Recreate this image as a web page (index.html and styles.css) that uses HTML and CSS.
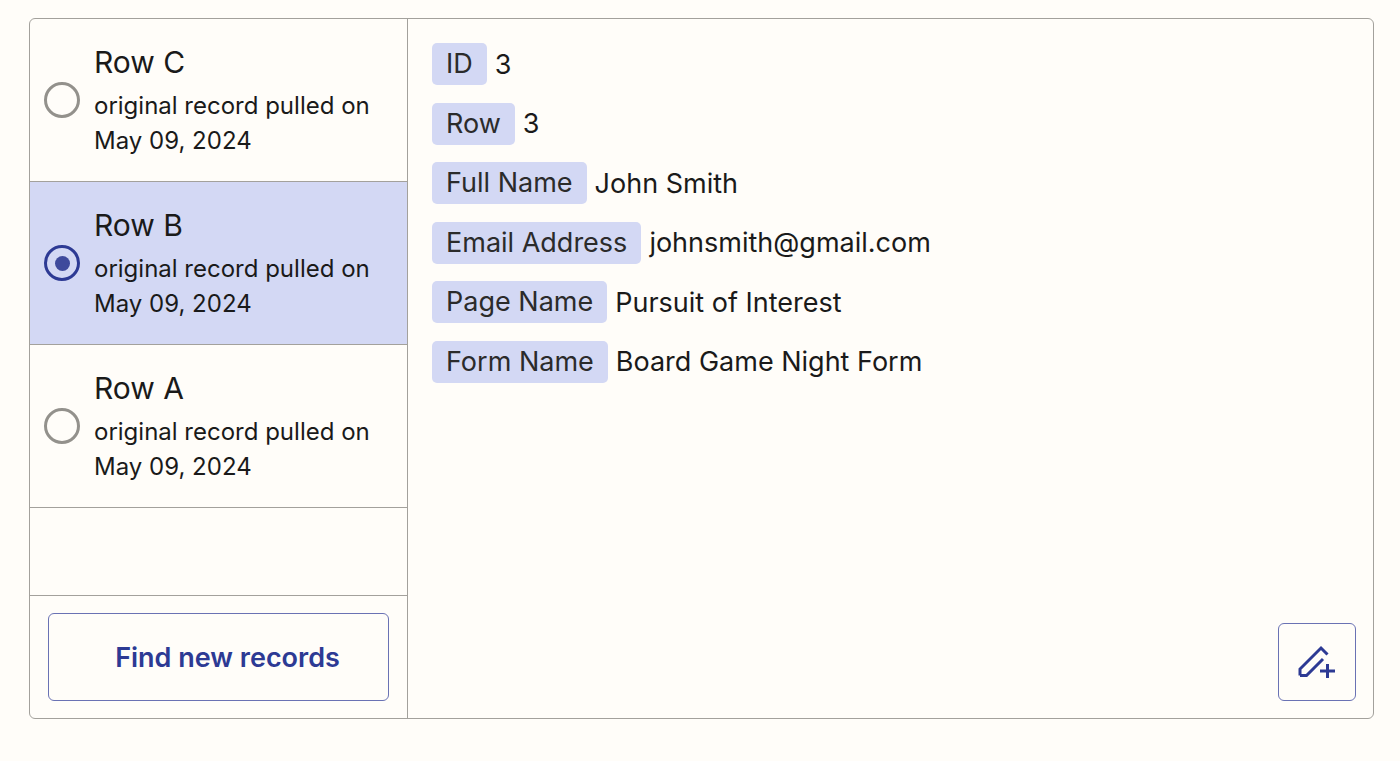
FILE: index.html
```html
<!DOCTYPE html>
<html>
<head>
	<meta charset="utf-8">
	<meta name="viewport" content="width=device-width, initial-scale=1">
	<title>Records</title>
	<link rel="stylesheet" href="styles.css">
</head>
<body>
	<div class=panel>
		<div class=sidebar>
			<div class=records>
				<div class=record>
					<span class=radio></span>
					<div class=record-text>
						<div class=record-name>Row C</div>
						<div class=record-date>original record pulled on May 09, 2024</div>
					</div>
				</div>
				<div class="record selected">
					<span class=radio></span>
					<div class=record-text>
						<div class=record-name>Row B</div>
						<div class=record-date>original record pulled on May 09, 2024</div>
					</div>
				</div>
				<div class=record>
					<span class=radio></span>
					<div class=record-text>
						<div class=record-name>Row A</div>
						<div class=record-date>original record pulled on May 09, 2024</div>
					</div>
				</div>
			</div>
			<div class=find>
				<button type=button class=find-btn>Find new records</button>
			</div>
		</div>
		<div class=details>
			<div class=field><span class=pill>ID</span><span class=value>3</span></div>
			<div class=field><span class=pill>Row</span><span class=value>3</span></div>
			<div class=field><span class=pill>Full Name</span><span class=value>John Smith</span></div>
			<div class=field><span class=pill>Email Address</span><span class=value>johnsmith@gmail.com</span></div>
			<div class=field><span class=pill>Page Name</span><span class=value>Pursuit of Interest</span></div>
			<div class=field><span class=pill>Form Name</span><span class=value>Board Game Night Form</span></div>
			<button type=button class=edit-btn aria-label="Add note">
				<svg width="40" height="40" viewBox="0 0 40 40" fill="none" stroke="#2d3a94" stroke-width="3">
					<path d="M3 33.5V27L24 6l6.5 6.5"/>
					<path d="M3 33.5h6.5L26 17"/>
					<path d="M23 31h15M30.500 24v14" transform="translate(0 -2)"/>
				</svg>
			</button>
		</div>
	</div>
</body>
</html>
```

FILE: styles.css
```css
* {
	box-sizing: border-box;
}
body {
	background-color: #fffdf9;
	color: #1a1a1a;
	margin: 0;
	padding: 18px 26px 42px 29px;
	font-family: Inter, "Liberation Sans", sans-serif;
}
.panel {
	display: flex;
	height: 701px;
	border: 1px solid #a3a19c;
	border-radius: 6px;
}
.sidebar {
	width: 378px;
	flex-shrink: 0;
	display: flex;
	flex-direction: column;
	border-right: 1px solid #a3a19c;
}
.records {
	flex-grow: 1;
}
.record {
	height: 163px;
	display: flex;
	align-items: center;
	gap: 14px;
	padding: 0 14px;
	border-bottom: 1px solid #a3a19c;
}
.record.selected {
	background-color: #d3d8f4;
}
.radio {
	width: 36px;
	height: 36px;
	flex-shrink: 0;
	border: 3px solid #93918c;
	border-radius: 50%;
	display: flex;
	align-items: center;
	justify-content: center;
}
.selected .radio {
	border-color: #2d3a94;
}
.selected .radio:after {
	content: "";
	width: 15px;
	height: 15px;
	border-radius: 50%;
	background-color: #3f4a9c;
}
.record-name {
	font-size: 30px;
	line-height: 40px;
	margin-bottom: 6px;
}
.record-date {
	font-size: 24px;
	line-height: 35px;
	width: 290px;
}
.find {
	height: 123px;
	padding: 17px 18px;
	border-top: 1px solid #a3a19c;
}
.find-btn {
	width: 100%;
	height: 88px;
	background: none;
	border: 1px solid #6a72b4;
	border-radius: 6px;
	color: #2d3a94;
	font-family: inherit;
	font-size: 27px;
	font-weight: 600;
	padding: 0 0 0 18px;
}
.details {
	flex-grow: 1;
	position: relative;
	padding: 24px 24px 0;
}
.field {
	display: flex;
	align-items: center;
	gap: 8px;
	height: 42px;
	margin-bottom: 17.5px;
	font-size: 27px;
}
.pill {
	background-color: #d3d8f4;
	color: #2b2b2b;
	border-radius: 5px;
	height: 42px;
	line-height: 42px;
	padding: 0 14px;
}
.edit-btn {
	position: absolute;
	right: 17px;
	bottom: 17px;
	width: 78px;
	height: 78px;
	background: none;
	border: 1px solid #6a72b4;
	border-radius: 6px;
	padding: 0;
	display: flex;
	align-items: center;
	justify-content: center;
}
```
